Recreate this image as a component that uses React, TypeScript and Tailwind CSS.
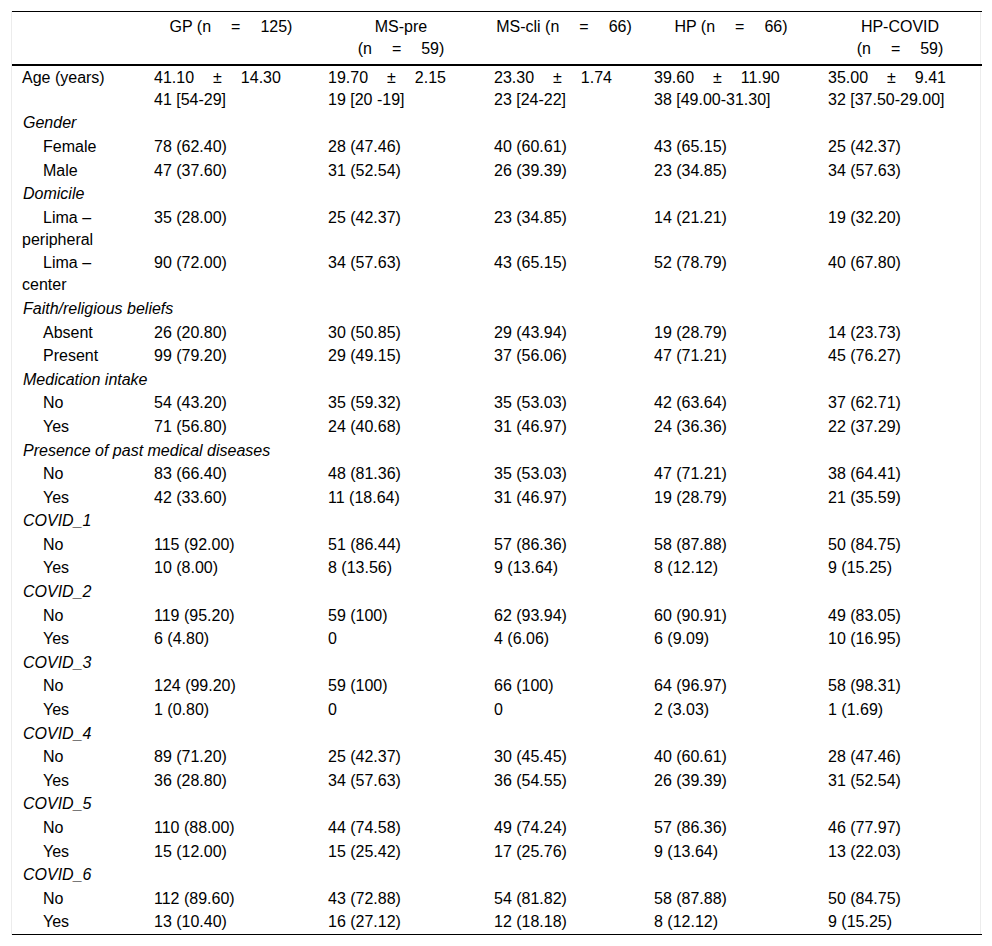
import React from "react";

// Data ---------------------------------------------------------------------------- ***
type Row =
  | { kind: "group"; label: string }
  | { kind: "item"; label: string[]; values: string[] };

const Gap = ({ w = "w-[19px]" }: { w?: string }) => (
  <span className={`inline-block ${w}`} />
);

const Stat = ({ a, b }: { a: string; b: string }) => (
  <>
    {a}
    <Gap />±<Gap />
    {b}
  </>
);

const sub = (label: string, values: string[]): Row => ({
  kind: "item",
  label: [label],
  values,
});

const rows: Row[] = [
  { kind: "group", label: "Gender" },
  sub("Female", ["78 (62.40)", "28 (47.46)", "40 (60.61)", "43 (65.15)", "25 (42.37)"]),
  sub("Male", ["47 (37.60)", "31 (52.54)", "26 (39.39)", "23 (34.85)", "34 (57.63)"]),
  { kind: "group", label: "Domicile" },
  {
    kind: "item",
    label: ["Lima –", "peripheral"],
    values: ["35 (28.00)", "25 (42.37)", "23 (34.85)", "14 (21.21)", "19 (32.20)"],
  },
  {
    kind: "item",
    label: ["Lima –", "center"],
    values: ["90 (72.00)", "34 (57.63)", "43 (65.15)", "52 (78.79)", "40 (67.80)"],
  },
  { kind: "group", label: "Faith/religious beliefs" },
  sub("Absent", ["26 (20.80)", "30 (50.85)", "29 (43.94)", "19 (28.79)", "14 (23.73)"]),
  sub("Present", ["99 (79.20)", "29 (49.15)", "37 (56.06)", "47 (71.21)", "45 (76.27)"]),
  { kind: "group", label: "Medication intake" },
  sub("No", ["54 (43.20)", "35 (59.32)", "35 (53.03)", "42 (63.64)", "37 (62.71)"]),
  sub("Yes", ["71 (56.80)", "24 (40.68)", "31 (46.97)", "24 (36.36)", "22 (37.29)"]),
  { kind: "group", label: "Presence of past medical diseases" },
  sub("No", ["83 (66.40)", "48 (81.36)", "35 (53.03)", "47 (71.21)", "38 (64.41)"]),
  sub("Yes", ["42 (33.60)", "11 (18.64)", "31 (46.97)", "19 (28.79)", "21 (35.59)"]),
  { kind: "group", label: "COVID_1" },
  sub("No", ["115 (92.00)", "51 (86.44)", "57 (86.36)", "58 (87.88)", "50 (84.75)"]),
  sub("Yes", ["10 (8.00)", "8 (13.56)", "9 (13.64)", "8 (12.12)", "9 (15.25)"]),
  { kind: "group", label: "COVID_2" },
  sub("No", ["119 (95.20)", "59 (100)", "62 (93.94)", "60 (90.91)", "49 (83.05)"]),
  sub("Yes", ["6 (4.80)", "0", "4 (6.06)", "6 (9.09)", "10 (16.95)"]),
  { kind: "group", label: "COVID_3" },
  sub("No", ["124 (99.20)", "59 (100)", "66 (100)", "64 (96.97)", "58 (98.31)"]),
  sub("Yes", ["1 (0.80)", "0", "0", "2 (3.03)", "1 (1.69)"]),
  { kind: "group", label: "COVID_4" },
  sub("No", ["89 (71.20)", "25 (42.37)", "30 (45.45)", "40 (60.61)", "28 (47.46)"]),
  sub("Yes", ["36 (28.80)", "34 (57.63)", "36 (54.55)", "26 (39.39)", "31 (52.54)"]),
  { kind: "group", label: "COVID_5" },
  sub("No", ["110 (88.00)", "44 (74.58)", "49 (74.24)", "57 (86.36)", "46 (77.97)"]),
  sub("Yes", ["15 (12.00)", "15 (25.42)", "17 (25.76)", "9 (13.64)", "13 (22.03)"]),
  { kind: "group", label: "COVID_6" },
  sub("No", ["112 (89.60)", "43 (72.88)", "54 (81.82)", "58 (87.88)", "50 (84.75)"]),
  sub("Yes", ["13 (10.40)", "16 (27.12)", "12 (18.18)", "8 (12.12)", "9 (15.25)"]),
];

const ages = [
  ["41.10", "14.30", "41 [54-29]"],
  ["19.70", "2.15", "19 [20 -19]"],
  ["23.30", "1.74", "23 [24-22]"],
  ["39.60", "11.90", "38 [49.00-31.30]"],
  ["35.00", "9.41", "32 [37.50-29.00]"],
];

const N = ({ n }: { n: string }) => (
  <>
    (n<Gap w="w-[20px]" />=<Gap w="w-[20px]" />
    {n})
  </>
);

const td = "px-[10px] py-[0.8px] align-top";
const th = "px-[10px] pt-[3.5px] pb-[4.5px] text-center align-top font-normal";

export default function App() {
  // JSX --------------------------------------------------------------------------- ***
  return (
    <div className="min-h-[946px] bg-white px-[11px] pt-[11px] font-['Liberation_Sans',Arial,sans-serif] text-[16px] leading-[22px] text-black">
      <div className="border-x border-[#ececec]">
        <table className="w-full table-fixed border-collapse">
          <colgroup>
            <col className="w-[132px]" />
            <col className="w-[174px]" />
            <col className="w-[166px]" />
            <col className="w-[160px]" />
            <col className="w-[174px]" />
            <col className="w-[164px]" />
          </colgroup>
          {/* Header ----------------------------------------------------------------- */}
          <thead>
            <tr className="border-t border-black border-b-[2px]">
              <th className={th} />
              <th className={th}>
                GP <N n="125" />
              </th>
              <th className={th}>
                MS-pre
                <br />
                <N n="59" />
              </th>
              <th className={th}>
                MS-cli <N n="66" />
              </th>
              <th className={th}>
                HP <N n="66" />
              </th>
              <th className={th}>
                HP-COVID
                <br />
                <N n="59" />
              </th>
            </tr>
          </thead>
          {/* ------------------------------------------------------------------------ */}
          {/* Body ------------------------------------------------------------------- */}
          <tbody className="border-b border-black">
            <tr>
              <td className={td}>Age (years)</td>
              {ages.map(([a, b, c]) => (
                <td key={c} className={td}>
                  <Stat a={a} b={b} />
                  <br />
                  {c}
                </td>
              ))}
            </tr>
            {rows.map((r, i) =>
              r.kind === "group" ? (
                <tr key={i}>
                  <td colSpan={6} className={`${td} pl-[11px] italic`}>
                    {r.label}
                  </td>
                </tr>
              ) : (
                <tr key={i}>
                  <td className={`${td} indent-[21px]`}>
                    {r.label.map((l, j) => (
                      <React.Fragment key={j}>
                        {j > 0 && <br />}
                        {l}
                      </React.Fragment>
                    ))}
                  </td>
                  {r.values.map((v, j) => (
                    <td key={j} className={td}>
                      {v}
                    </td>
                  ))}
                </tr>
              )
            )}
          </tbody>
          {/* ------------------------------------------------------------------------ */}
        </table>
      </div>
    </div>
  );
}
